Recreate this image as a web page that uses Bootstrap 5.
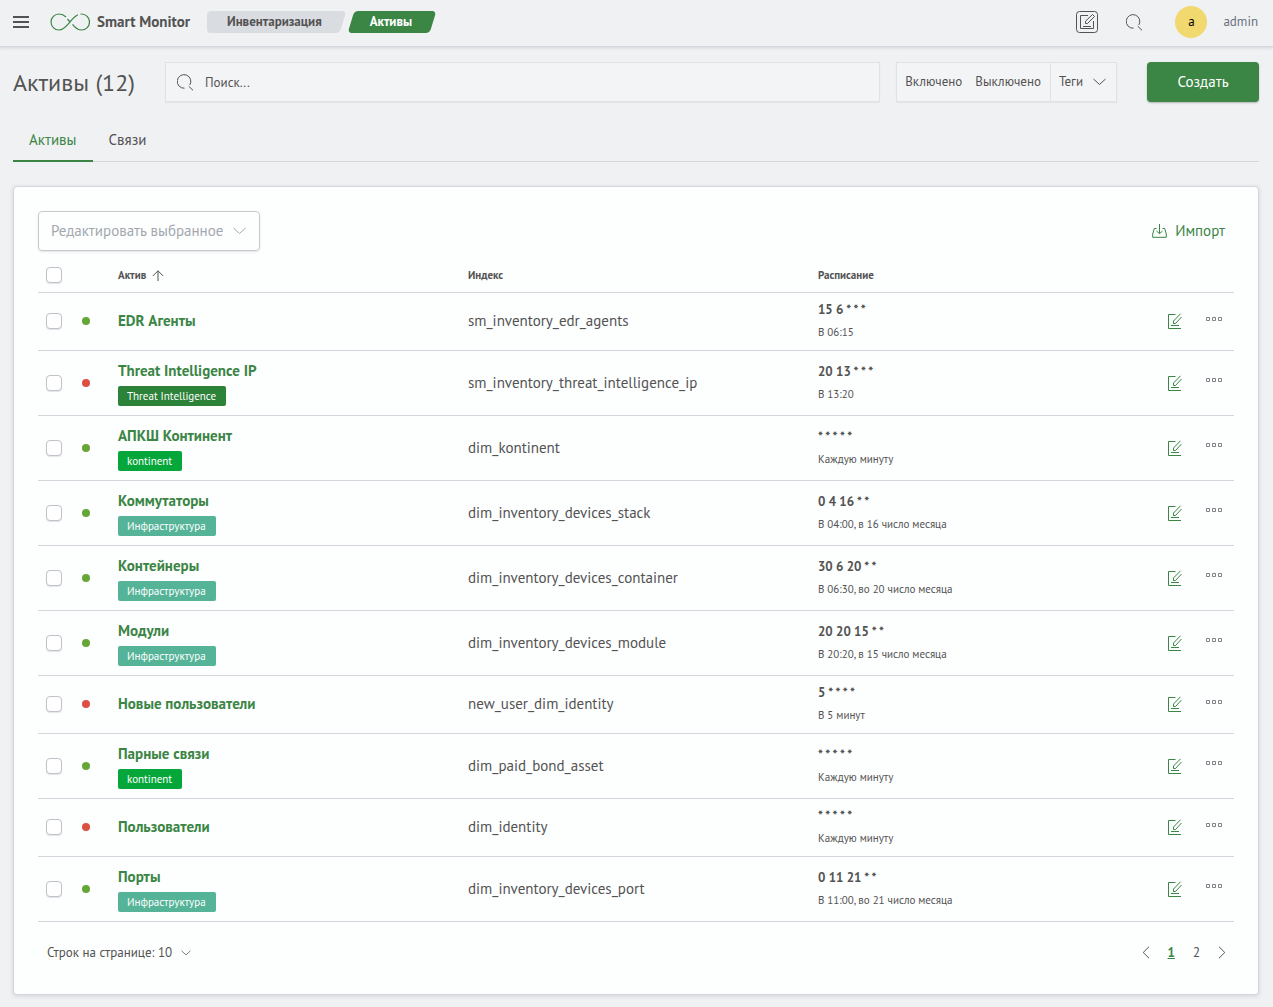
<!DOCTYPE html>
<html lang="ru">
<head>
<meta charset="utf-8">
<meta name="viewport" content="width=device-width, initial-scale=1">
<title>Smart Monitor</title>
<link href="https://cdn.jsdelivr.net/npm/bootstrap@5.3.0/dist/css/bootstrap.min.css" rel="stylesheet">
<style>
:root { --ink: #535353; --green: #3b8545; --line: #d3d6dc; --page: #f0f1f3; }
body { font-family: "PT Sans", Roboto, "Noto Sans", sans-serif; font-size: 15px; line-height: 20px; color: var(--ink); background: var(--page); }
svg { display: block; fill: none; stroke: currentColor; flex: none; }
a { color: var(--green); text-decoration: none; }
button { color: inherit; }
.plain-btn { border: 0; background: none; padding: 0; }
.topbar { height: 47px; padding: 0 15px 2px 13px; border-bottom: 1px solid var(--line); box-shadow: 0 1px 3px rgba(80,90,110,.18); }
.brand { font-size: 15px; font-weight: 700; color: var(--ink); gap: 7px; margin-left: 21px; }
.brand svg { color: var(--green); }
.crumbs { gap: 2px; margin: 0 0 0 17px; padding: 0; list-style: none; font-size: 13px; font-weight: 700; line-height: 22px; }
.crumbs li { position: relative; z-index: 0; padding: 0 24px 0 20px; }
.crumbs li + li { padding: 0 24px 0 22px; color: #fff; }
.crumbs a { color: var(--ink); }
.crumbs li::before { content: ""; position: absolute; z-index: -1; inset: 0 3px; border-radius: 4px; background: #d9dce1; transform: skewX(-17deg); }
.crumbs li:first-child::after { content: ""; position: absolute; z-index: -1; inset: 0 50% 0 0; border-radius: 4px 0 0 4px; background: #d9dce1; }
.crumbs li + li::before { background: var(--green); }
.quick-tools { gap: 28px; }
.avatar { width: 32px; height: 32px; border-radius: 50%; background: #f1d86f; color: #000; font-size: 13px; margin: 0 16px 0 32px; }
.user-name { font-size: 13px; color: #69707d; }
main { padding: 15px 14px 13px 13px; }
h1 { font-size: 24px; line-height: 38px; font-weight: 400; margin: 0 30px 0 0; padding-top: 2px; }
.field-box { height: 40px; border: 1px solid #dfe3e6; background: #f3f4f6; box-shadow: 0 1px 1px rgba(80,90,110,.08); font-size: 13px; }
.search-box { padding-left: 11px; gap: 11px; }
.search-box input { border: 0; outline: 0; background: none; color: var(--ink); padding: 2px 0 0; }
.search-box input::placeholder { color: var(--ink); opacity: 1; }
.filters { margin: 0 30px 0 16px; }
.filters button { padding: 0 8px; }
.filters button + button { padding: 0 9px 0 5px; }
.filters .tag-filter.plain-btn { border-left: 1px solid #dfe3e6; padding: 0 10px 0 8px; gap: 10px; }
.create-btn { height: 40px; width: 112px; border: 0; border-radius: 4px; background: var(--green); color: #fff; font-size: 15px; box-shadow: 0 1px 2px rgba(0,0,0,.25); }
.create-btn:hover { background: #327a3c; color: #fff; }
.page-tabs { margin-top: 16px; box-shadow: inset 0 -1px var(--line); }
.page-tabs a { padding: 12px 16px 10px; line-height: 20px; color: var(--ink); border-bottom: 2px solid transparent; }
.page-tabs a.active { color: var(--green); border-color: var(--green); }
.panel { margin-top: 24px; padding: 24px; background: #fdfefe; border: 1px solid var(--line); border-radius: 4px; box-shadow: 0 1px 4px rgba(80,90,110,.2); }
.bulk-btn { height: 40px; border: 1px solid #c6c9ce; border-radius: 4px; padding: 0 13px 0 12px; gap: 10px; background: none; color: #a3a8ae; box-shadow: 0 1px 2px rgba(80,90,110,.15); }
.import-btn { color: var(--green); gap: 8px; margin-right: 9px; }
.assets { width: 100%; table-layout: fixed; margin-top: 8px; }
.assets th, .assets td { padding: 0 8px; border-bottom: 1px solid var(--line); }
.assets th { height: 33px; font-size: 11px; line-height: 16px; }
.assets td { height: 58px; }
.assets .tagged td { height: 65px; }
.w-check { width: 32px; } .w-state { width: 40px; } .w-tools { width: 74px; }
.sort-label { gap: 6px; }
.assets input { appearance: none; display: block; width: 16px; height: 16px; margin: 0; border: 1px solid #bfc2c9; border-radius: 4px; background: #fff; box-shadow: 0 1px 1px rgba(80,90,110,.15); }
.assets input:checked { background: var(--green); }
.state-dot { display: block; width: 8px; height: 8px; border-radius: 50%; margin-left: 4px; background: #66a636; }
.state-dot.off { background: #dc5042; }
.asset-name { display: block; font-weight: 700; }
.tagged .asset-name { padding-top: 2px; }
.tag-chip { display: block; width: fit-content; margin-top: 5px; padding: 0 10px 0 9px; border-radius: 2px; font-size: 11px; line-height: 20px; color: #fff; }
.tag-ti { background: #2c8239; } .tag-kont { background: #05a63a; } .tag-infra { background: #55b398; }
.cron { font-size: 13px; font-weight: 700; line-height: 22px; }
.cron-text { font-size: 11px; line-height: 22px; }
.row-tools { gap: 24px; }
.row-tools .edit { color: var(--green); }
.row-tools .more { color: #808287; padding-bottom: 4px; }
.pager { margin-top: 21px; padding: 0 8px 7px 9px; font-size: 13px; }
.pager .page-size { gap: 9px; }
.pager nav { gap: 18px; }
.pager nav a { color: var(--ink); }
.pager nav .current { color: var(--green); font-weight: 700; text-decoration: underline; }
</style>
<script src="https://cdn.jsdelivr.net/npm/bootstrap@5.3.0/dist/js/bootstrap.bundle.min.js"></script>
</head>
<body>
<svg width="0" height="0" class="position-absolute" aria-hidden="true">
  <symbol id="i-edit" viewBox="0 0 14 16"><path d="M7.500 1.500H.5v14H13M3 12.500h8"/><path d="M12.500.8L5.500 8v2.500h2L13.500 4"/></symbol>
  <symbol id="i-more" viewBox="0 0 16 5"><path d="M.5.5h3v3h-3zM6.500.5h3v3h-3zM12.500.5h3v3h-3z"/></symbol>
  <symbol id="i-down" viewBox="0 0 13 8"><path d="M.5 1l6 5.500 6-5.500"/></symbol>
  <symbol id="i-search" viewBox="0 0 17 17"><path d="M7.500 14.200A6.800 6.800 0 1 1 12.800 11M11.800 12.300l4.200 4"/></symbol>
</svg>
<header class="topbar d-flex align-items-center">
  <button class="plain-btn" type="button" aria-label="Меню"><svg width="16" height="12" stroke-width="2"><path d="M0 1h16M0 6h16M0 11h16"/></svg></button>
  <a class="brand d-flex align-items-center" href="#">
    <svg width="40" height="18" stroke-width="1.200"><path d="M16 4C14 2 11.500 1 9 1a8 8 0 0 0 0 16c4.500 0 7.500-4 11-8s4.500-6 8-7.300M17.500 6l2.500 3M30.500 1H31.500a8 8 0 0 1 0 16c-4 0-6.500-2.500-9-5.700"/></svg>
    Smart Monitor
  </a>
  <ol class="crumbs d-flex"><li><a href="#">Инвентаризация</a></li><li aria-current="page">Активы</li></ol>
  <div class="quick-tools d-flex align-items-center ms-auto">
    <button class="plain-btn" type="button" aria-label="Редактор"><svg width="22" height="22"><rect x=".5" y=".5" width="21" height="21" rx="3"/><path d="M12 4.500H4.500v13h13V10M7 15.500h8M9.500 12.500v-2.300L16.500 3.500l2 2-7 7z"/></svg></button>
    <button class="plain-btn" type="button" aria-label="Поиск"><svg width="17" height="17"><use href="#i-search"/></svg></button>
  </div>
  <span class="avatar d-flex align-items-center justify-content-center">a</span>
  <span class="user-name">admin</span>
</header>
<main>
  <div class="d-flex align-items-center">
    <h1>Активы (12)</h1>
    <label class="field-box search-box d-flex align-items-center flex-grow-1" aria-label="Поиск">
      <svg width="17" height="17"><use href="#i-search"/></svg>
      <input class="flex-grow-1" type="search" placeholder="Поиск...">
    </label>
    <div class="field-box filters d-flex">
      <button class="plain-btn px-2" type="button">Включено</button>
      <button class="plain-btn" type="button">Выключено</button>
      <button class="plain-btn tag-filter d-flex align-items-center" type="button">Теги<svg width="13" height="8"><use href="#i-down"/></svg></button>
    </div>
    <button class="btn create-btn" type="button">Создать</button>
  </div>
  <nav class="page-tabs d-flex"><a class="active" href="#">Активы</a><a href="#">Связи</a></nav>
  <section class="panel">
    <div class="d-flex justify-content-between align-items-center">
      <button class="bulk-btn d-flex align-items-center" type="button" disabled>Редактировать выбранное<svg width="13" height="8"><use href="#i-down"/></svg></button>
      <button class="plain-btn import-btn d-flex align-items-center" type="button"><svg width="15" height="14"><path d="M4.500 4.500H2.300L.7 10v3.300h13.600V10l-1.600-5.500h-2.200M7.500 0v9.500M4.500 7l3 2.700 3-2.700"/></svg>Импорт</button>
    </div>
    <table class="assets">
      <colgroup><col class="w-check"><col class="w-state"><col><col><col><col class="w-tools"></colgroup>
      <thead><tr>
        <th><input type="checkbox" aria-label="Выбрать все"></th><th></th>
        <th><span class="sort-label d-flex align-items-center">Актив<svg width="12" height="11"><path d="M6 11V.8M.8 6L6 .8 11.200 6"/></svg></span></th>
        <th>Индекс</th><th>Расписание</th><th></th>
      </tr></thead>
      <tbody id="rows"></tbody>
    </table>
    <div class="pager d-flex justify-content-between align-items-center">
      <button class="plain-btn page-size d-flex align-items-center" type="button">Строк на странице: 10<svg width="10" height="6" viewBox="0 0 13 8"><use href="#i-down"/></svg></button>
      <nav class="d-flex align-items-center" aria-label="Страницы">
        <a href="#" aria-label="Назад"><svg width="8" height="13"><path d="M7 .8L1.200 6.500 7 12.200"/></svg></a>
        <a class="current" href="#">1</a><a href="#">2</a>
        <a href="#" aria-label="Вперёд"><svg width="8" height="13"><path d="M1 .8l5.800 5.700L1 12.200"/></svg></a>
      </nav>
    </div>
  </section>
</main>
<script>
const tags = { ti: 'Threat Intelligence', kont: 'kontinent', infra: 'Инфраструктура' };
const assets = [
  ['EDR Агенты', '', 1, 'sm_inventory_edr_agents', '15 6 * * *', 'В 06:15'],
  ['Threat Intelligence IP', 'ti', 0, 'sm_inventory_threat_intelligence_ip', '20 13 * * *', 'В 13:20'],
  ['АПКШ Континент', 'kont', 1, 'dim_kontinent', '* * * * *', 'Каждую минуту'],
  ['Коммутаторы', 'infra', 1, 'dim_inventory_devices_stack', '0 4 16 * *', 'В 04:00, в 16 число месяца'],
  ['Контейнеры', 'infra', 1, 'dim_inventory_devices_container', '30 6 20 * *', 'В 06:30, во 20 число месяца'],
  ['Модули', 'infra', 1, 'dim_inventory_devices_module', '20 20 15 * *', 'В 20:20, в 15 число месяца'],
  ['Новые пользователи', '', 0, 'new_user_dim_identity', '5 * * * *', 'В 5 минут'],
  ['Парные связи', 'kont', 1, 'dim_paid_bond_asset', '* * * * *', 'Каждую минуту'],
  ['Пользователи', '', 0, 'dim_identity', '* * * * *', 'Каждую минуту'],
  ['Порты', 'infra', 1, 'dim_inventory_devices_port', '0 11 21 * *', 'В 11:00, во 21 число месяца']
];
document.getElementById('rows').innerHTML = assets.map(([name, tag, on, index, cron, text]) => `
<tr class="${tag ? 'tagged' : ''}">
  <td><input type="checkbox" aria-label="${name}"></td>
  <td><span class="state-dot ${on ? '' : 'off'}"></span></td>
  <td><a class="asset-name" href="#">${name}</a>${tag ? `<span class="tag-chip tag-${tag}">${tags[tag]}</span>` : ''}</td>
  <td>${index}</td>
  <td><div class="cron">${cron}</div><div class="cron-text">${text}</div></td>
  <td><div class="row-tools d-flex align-items-center">
    <button class="plain-btn edit" type="button" aria-label="Изменить"><svg width="14" height="16"><use href="#i-edit"/></svg></button>
    <button class="plain-btn more" type="button" aria-label="Ещё"><svg width="16" height="5"><use href="#i-more"/></svg></button>
  </div></td>
</tr>`).join('');
</script>
</body>
</html>
